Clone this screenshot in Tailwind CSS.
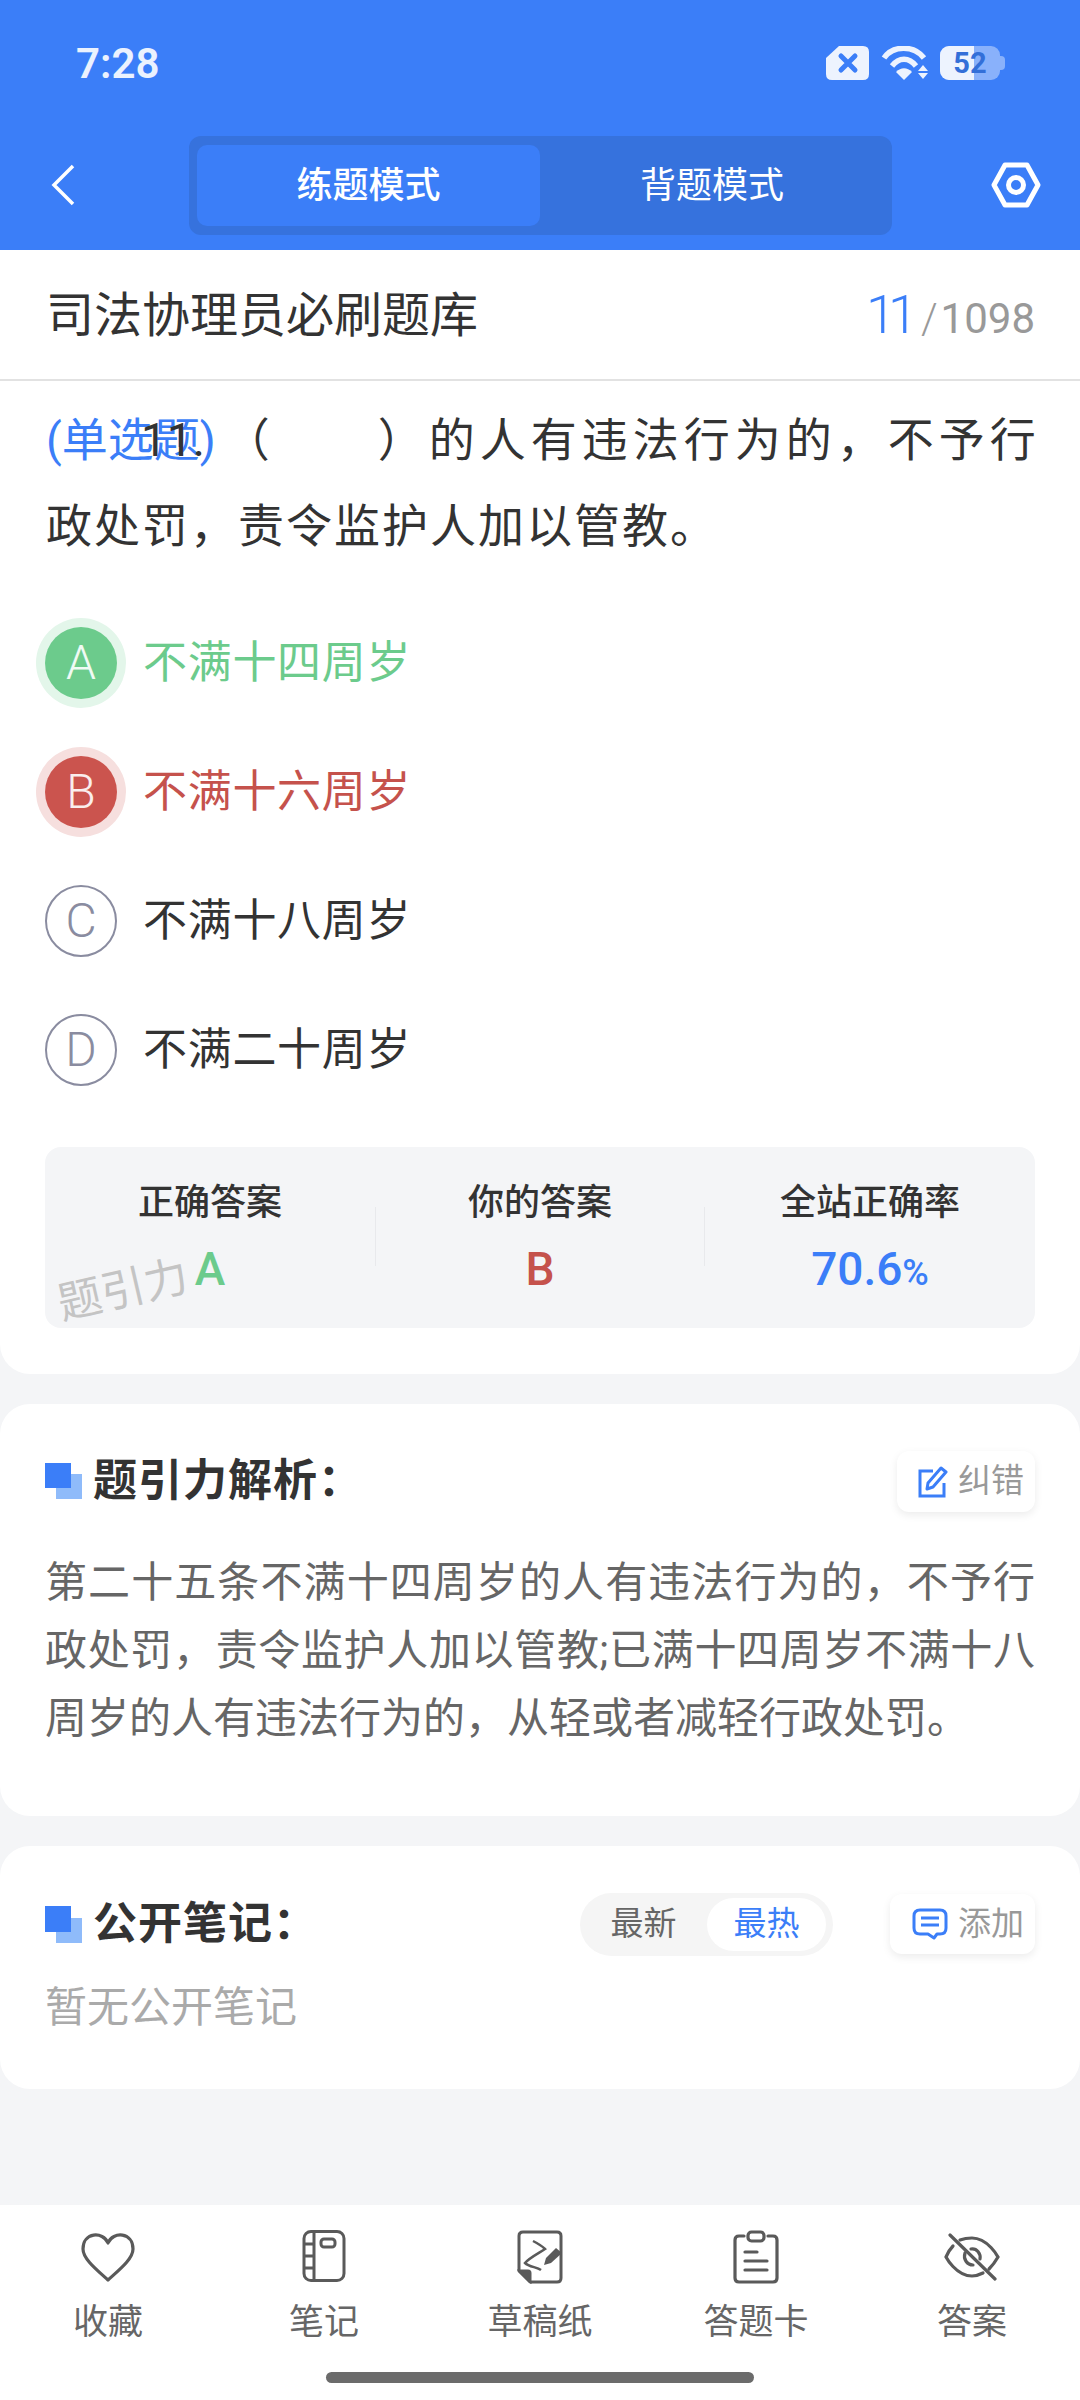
<!DOCTYPE html>
<html lang="zh">
<head>
<meta charset="UTF-8">
<title>练题模式</title>
<script src="https://cdn.jsdelivr.net/npm/@tailwindcss/browser@4"></script>
</head>
<body class="w-[1080px] h-[2400px] overflow-hidden bg-[#f4f5f7] font-['Roboto','Noto_Sans_CJK_SC',sans-serif] text-[#333] flex flex-col">

<!-- header -->
<header class="bg-[#3b7ef8] h-[250px] shrink-0 text-white">
  <div class="h-[136px] relative">
    <span class="absolute left-[76px] top-[39px] text-[42px] leading-[50px] font-semibold text-white/90">7:28</span>
    <div class="absolute left-[826px] top-[46px] flex items-center">
      <svg width="43" height="34" viewBox="0 0 43 34"><path d="M13 0H37Q43 0 43 6V28Q43 34 37 34H6Q0 34 0 28V12Z" fill="#edf3fe"/><path d="M15 10L29 24M29 10L15 24" stroke="#3b7ef8" stroke-width="5" stroke-linecap="round"/></svg>
      <svg class="ml-[12px]" width="48" height="34" viewBox="0 0 48 34" fill="none"><path d="M3 12C12 -1 33 -1 43 12" stroke="#edf3fe" stroke-width="5.5"/><path d="M11 20C18 11 28 11 35 20" stroke="#edf3fe" stroke-width="5.5"/><path d="M15 26C20 21 26 21 31 26L23 34Z" fill="#edf3fe"/><path d="M42 19L47 25H37ZM37 27H47L42 33Z" fill="#edf3fe"/></svg>
      <div class="ml-[11px] relative w-[65px] h-[34px]">
        <div class="absolute left-0 top-0 w-[60px] h-[34px] rounded-[9px] bg-white/40"></div>
        <div class="absolute right-0 top-[10px] w-[5px] h-[14px] rounded-r-[4px] bg-white/40"></div>
        <div class="absolute left-0 top-0 w-[34px] h-[34px] rounded-l-[9px] bg-[#edf3fe]"></div>
        <span class="absolute left-[10px] top-0 w-[40px] text-center text-[29px] leading-[34px] font-bold text-[#336fd8]">52</span>
      </div>
    </div>
  </div>
  <div class="flex items-start">
    <svg class="ml-[51px] mt-[28px]" width="24" height="42" viewBox="0 0 24 42" fill="none"><path d="M22 2L3 21L22 40" stroke="#fff" stroke-width="3.5"/></svg>
    <div class="ml-[114px] w-[703px] h-[99px] rounded-[12px] bg-[#3672dd] flex p-[9px_8px]">
      <div class="w-[343px] h-[81px] rounded-[10px] bg-[#3b7ef8] flex items-center justify-center text-[36px] font-medium">练题模式</div>
      <div class="flex-1 flex items-center justify-center text-[36px]">背题模式</div>
    </div>
    <svg class="ml-[99px] mt-[26px]" width="50" height="46" viewBox="0 0 50 46" fill="none"><path d="M14 3H36L47 23L36 43H14L3 23Z" stroke="#fff" stroke-width="5" stroke-linejoin="round"/><circle cx="25" cy="23" r="7.5" stroke="#fff" stroke-width="5"/></svg>
  </div>
</header>

<main class="flex-1 flex flex-col min-h-0">
  <!-- question card -->
  <section class="bg-white h-[1124px] rounded-b-[30px] shrink-0">
    <div class="h-[131px] border-b-2 border-[#e2e2e2] flex items-center justify-between pl-[46px] pr-[45px]">
      <h1 class="text-[48px] font-normal pt-[2px]">司法协理员必刷题库</h1>
      <div class="flex items-baseline text-[#999] text-[42px]">
        <span class="text-[54px] font-light text-[#3b7ef8] tracking-[-8px] mr-[5px]">11</span><span class="ml-[6px] mr-[3px] font-light">/</span><span>1098</span>
      </div>
    </div>

    <div class="relative pl-[46px] pt-[16px] text-[46px] leading-[86px] h-[217px]">
      <p class="whitespace-nowrap tracking-[5px]"><span class="text-[#3b7ef8] tracking-normal">(单选题)</span><span class="ml-[8px]">（</span><span class="ml-[103px]">）</span>的人有违法行为的，不予行</p>
      <p class="whitespace-nowrap tracking-[2px]">政处罚，责令监护人加以管教。</p>
      <span class="absolute left-[141px] top-[16px]">11.</span>
    </div>

    <ul class="text-[44px]">
      <li class="h-[129px] flex items-center pl-[45px]">
        <span class="w-[72px] h-[72px] rounded-full bg-[#6ccb8c] ring-[9px] ring-[#e3f6ea] text-white/90 flex items-center justify-center text-[48px] font-light">A</span>
        <span class="ml-[26px] text-[#6ccb8c] tracking-[0.7px]">不满十四周岁</span>
      </li>
      <li class="h-[129px] flex items-center pl-[45px]">
        <span class="w-[72px] h-[72px] rounded-full bg-[#cb544e] ring-[9px] ring-[#f6dfde] text-white/90 flex items-center justify-center text-[48px] font-light">B</span>
        <span class="ml-[26px] text-[#c5524c] tracking-[0.7px]">不满十六周岁</span>
      </li>
      <li class="h-[129px] flex items-center pl-[45px]">
        <span class="w-[72px] h-[72px] rounded-full border-2 border-[#8a8ca0] text-[#8a8ca0] flex items-center justify-center text-[48px] font-light">C</span>
        <span class="ml-[26px] tracking-[0.7px]">不满十八周岁</span>
      </li>
      <li class="h-[129px] flex items-center pl-[45px]">
        <span class="w-[72px] h-[72px] rounded-full border-2 border-[#8a8ca0] text-[#8a8ca0] flex items-center justify-center text-[48px] font-light">D</span>
        <span class="ml-[26px] tracking-[0.7px]">不满二十周岁</span>
      </li>
    </ul>

    <div class="relative mx-[45px] mt-[33px] h-[181px] rounded-[16px] bg-[#f4f5f7] grid grid-cols-3">
      <div class="flex flex-col items-center pt-[34px]">
        <span class="text-[36px] leading-[44px] font-medium">正确答案</span>
        <span class="text-[46px] leading-[54px] mt-[17px] font-medium text-[#6ccb8c]">A</span>
      </div>
      <div class="flex flex-col items-center pt-[34px] relative before:absolute before:left-0 before:top-[60px] before:h-[59px] before:w-px before:bg-[#e8e9ec] after:absolute after:right-0 after:top-[60px] after:h-[59px] after:w-px after:bg-[#e8e9ec]">
        <span class="text-[36px] leading-[44px] font-medium">你的答案</span>
        <span class="text-[46px] leading-[54px] mt-[17px] font-medium text-[#c5524c]">B</span>
      </div>
      <div class="flex flex-col items-center pt-[34px]">
        <span class="text-[36px] leading-[44px] font-medium">全站正确率</span>
        <span class="text-[46px] leading-[54px] mt-[17px] font-medium text-[#3b7ef8]">70.6<span class="text-[36px]">%</span></span>
      </div>
      <span class="absolute left-[12px] top-[118px] text-[44px] leading-[50px] text-[#c4c4c4] -rotate-[13deg]">题引力</span>
    </div>
  </section>

  <!-- analysis card -->
  <section class="bg-white h-[412px] mt-[30px] rounded-[30px] shrink-0 px-[45px]">
    <div class="flex items-center justify-between pt-[44px]">
      <div class="flex items-center">
        <div class="relative w-[37px] h-[36px]">
          <div class="absolute right-0 bottom-0 w-[26px] h-[25px] bg-[#8fbbfa]"></div>
          <div class="absolute left-0 top-0 w-[26px] h-[25px] bg-[#3b7ef8]"></div>
        </div>
        <h2 class="ml-[11px] text-[44px] font-semibold tracking-[1px]">题引力解析：</h2>
      </div>
      <button class="w-[138px] h-[61px] rounded-[12px] bg-white shadow-[0_3px_8px_rgba(0,0,0,0.08)] flex items-center pl-[21px] text-[33px] text-[#999]">
        <svg width="30" height="33" viewBox="0 0 30 33" fill="none" stroke="#3b7ef8" stroke-width="3"><path d="M15 6H2V31H26V18"/><path d="M10 18L23 3L28 7L15 22L9 24Z" stroke-linejoin="round"/></svg>
        <span class="ml-[10px]">纠错</span>
      </button>
    </div>
    <div class="mt-[35px] text-[42px] leading-[68px] text-[#666] whitespace-nowrap">
      <p class="[text-align-last:justify]">第二十五条不满十四周岁的人有违法行为的，不予行</p>
      <p class="[text-align-last:justify]">政处罚，责令监护人加以管教;已满十四周岁不满十八</p>
      <p>周岁的人有违法行为的，从轻或者减轻行政处罚。</p>
    </div>
  </section>

  <!-- notes card -->
  <section class="bg-white h-[243px] mt-[30px] rounded-[30px] shrink-0 px-[45px]">
    <div class="flex items-center pt-[45px]">
      <div class="relative w-[37px] h-[37px]">
        <div class="absolute right-0 bottom-0 w-[26px] h-[25px] bg-[#8fbbfa]"></div>
        <div class="absolute left-0 top-0 w-[26px] h-[26px] bg-[#3b7ef8]"></div>
      </div>
      <h2 class="ml-[11px] text-[44px] font-semibold tracking-[1px]">公开笔记：</h2>
      <div class="ml-auto w-[253px] h-[63px] rounded-full bg-[#f5f5f5] flex items-center text-[33px] p-[5px_7px_5px_0]">
        <span class="flex-1 text-center text-[#666]">最新</span>
        <span class="w-[119px] h-full rounded-full bg-white text-[#3b7ef8] flex items-center justify-center">最热</span>
      </div>
      <button class="ml-[57px] w-[145px] h-[60px] rounded-[12px] bg-white shadow-[0_3px_8px_rgba(0,0,0,0.08)] flex items-center pl-[22px] text-[33px] text-[#999]">
        <svg width="36" height="32" viewBox="0 0 36 32" fill="none" stroke="#3b7ef8" stroke-width="3"><path d="M8 2H28Q34 2 34 8V20Q34 26 28 26H25L22 30L16 26H8Q2 26 2 20V8Q2 2 8 2Z" stroke-linejoin="round"/><path d="M9 10H27M9 17H27"/></svg>
        <span class="ml-[10px]">添加</span>
      </button>
    </div>
    <p class="mt-[23px] text-[42px] leading-[56px] text-[#aaa]">暂无公开笔记</p>
  </section>
</main>

<!-- bottom nav -->
<nav class="bg-white h-[195px] shrink-0 relative">
  <div class="grid grid-cols-5 pt-[25px] text-[35px] text-[#666]">
    <div class="flex flex-col items-center">
      <svg width="54" height="52" viewBox="0 0 54 52" fill="none" stroke="#5a5a5a" stroke-width="3.2"><path d="M27 13C22 1 2 2 2 19C2 29 16 40 27 50C38 40 52 29 52 19C52 2 32 1 27 13Z" stroke-linejoin="round"/></svg>
      <span class="mt-[18px] leading-[46px]">收藏</span>
    </div>
    <div class="flex flex-col items-center">
      <svg width="44" height="52" viewBox="0 0 44 52" fill="none" stroke="#5a5a5a" stroke-width="3"><rect x="2" y="1.500" width="40" height="49" rx="7"/><path d="M12 2V50M2 14H12M2 26H12M2 38H12"/><rect x="19" y="9" width="14" height="8" rx="3"/></svg>
      <span class="mt-[18px] leading-[46px]">笔记</span>
    </div>
    <div class="flex flex-col items-center">
      <svg width="46" height="54" viewBox="0 0 46 54" fill="none" stroke="#5a5a5a" stroke-width="3"><path d="M6 2H40Q44 2 44 6V48Q44 52 40 52H13L2 41V6Q2 2 6 2Z" stroke-linejoin="round"/><path d="M3 41H11Q13 41 13 43V51Z" fill="#5a5a5a"/><path d="M16 11C20 13 25 16 28 19C22 23 12 28 8 33C12 37 20 37 24 40" stroke-width="2.500"/><path d="M27 35L29 28L39 18L45 23L34 33Z" fill="#5a5a5a" stroke="none"/></svg>
      <span class="mt-[16px] leading-[46px]">草稿纸</span>
    </div>
    <div class="flex flex-col items-center">
      <svg width="46" height="54" viewBox="0 0 46 54" fill="none" stroke="#5a5a5a" stroke-width="3.2" stroke-linecap="round"><path d="M11 6H6Q2 6 2 10V48Q2 52 6 52H40Q44 52 44 48V10Q44 6 40 6H35"/><rect x="15" y="2" width="16" height="9" rx="3.500"/><path d="M12 22H24M12 31H34M12 40H34"/></svg>
      <span class="mt-[16px] leading-[46px]">答题卡</span>
    </div>
    <div class="flex flex-col items-center">
      <svg width="58" height="48" class="mt-[3px]" viewBox="0 0 58 48" fill="none" stroke="#5a5a5a" stroke-width="3.2" stroke-linecap="round"><path d="M7 2L52 46"/><path d="M17 7C21 5.500 25 5 29 5C45 5 55 24 55 24C55 24 51 31 46 36"/><path d="M10 13C6 17 3 24 3 24C3 24 13 43 29 43C33 43 36 42 40 40"/><path d="M22 20C20 26 24 32 30 32"/><path d="M28 16C34 15 38 21 37 26"/></svg>
      <span class="mt-[19px] leading-[46px]">答案</span>
    </div>
  </div>
  <div class="absolute left-[326px] top-[167px] w-[428px] h-[11px] rounded-full bg-[#6b6b6b]"></div>
</nav>

</body>
</html>
